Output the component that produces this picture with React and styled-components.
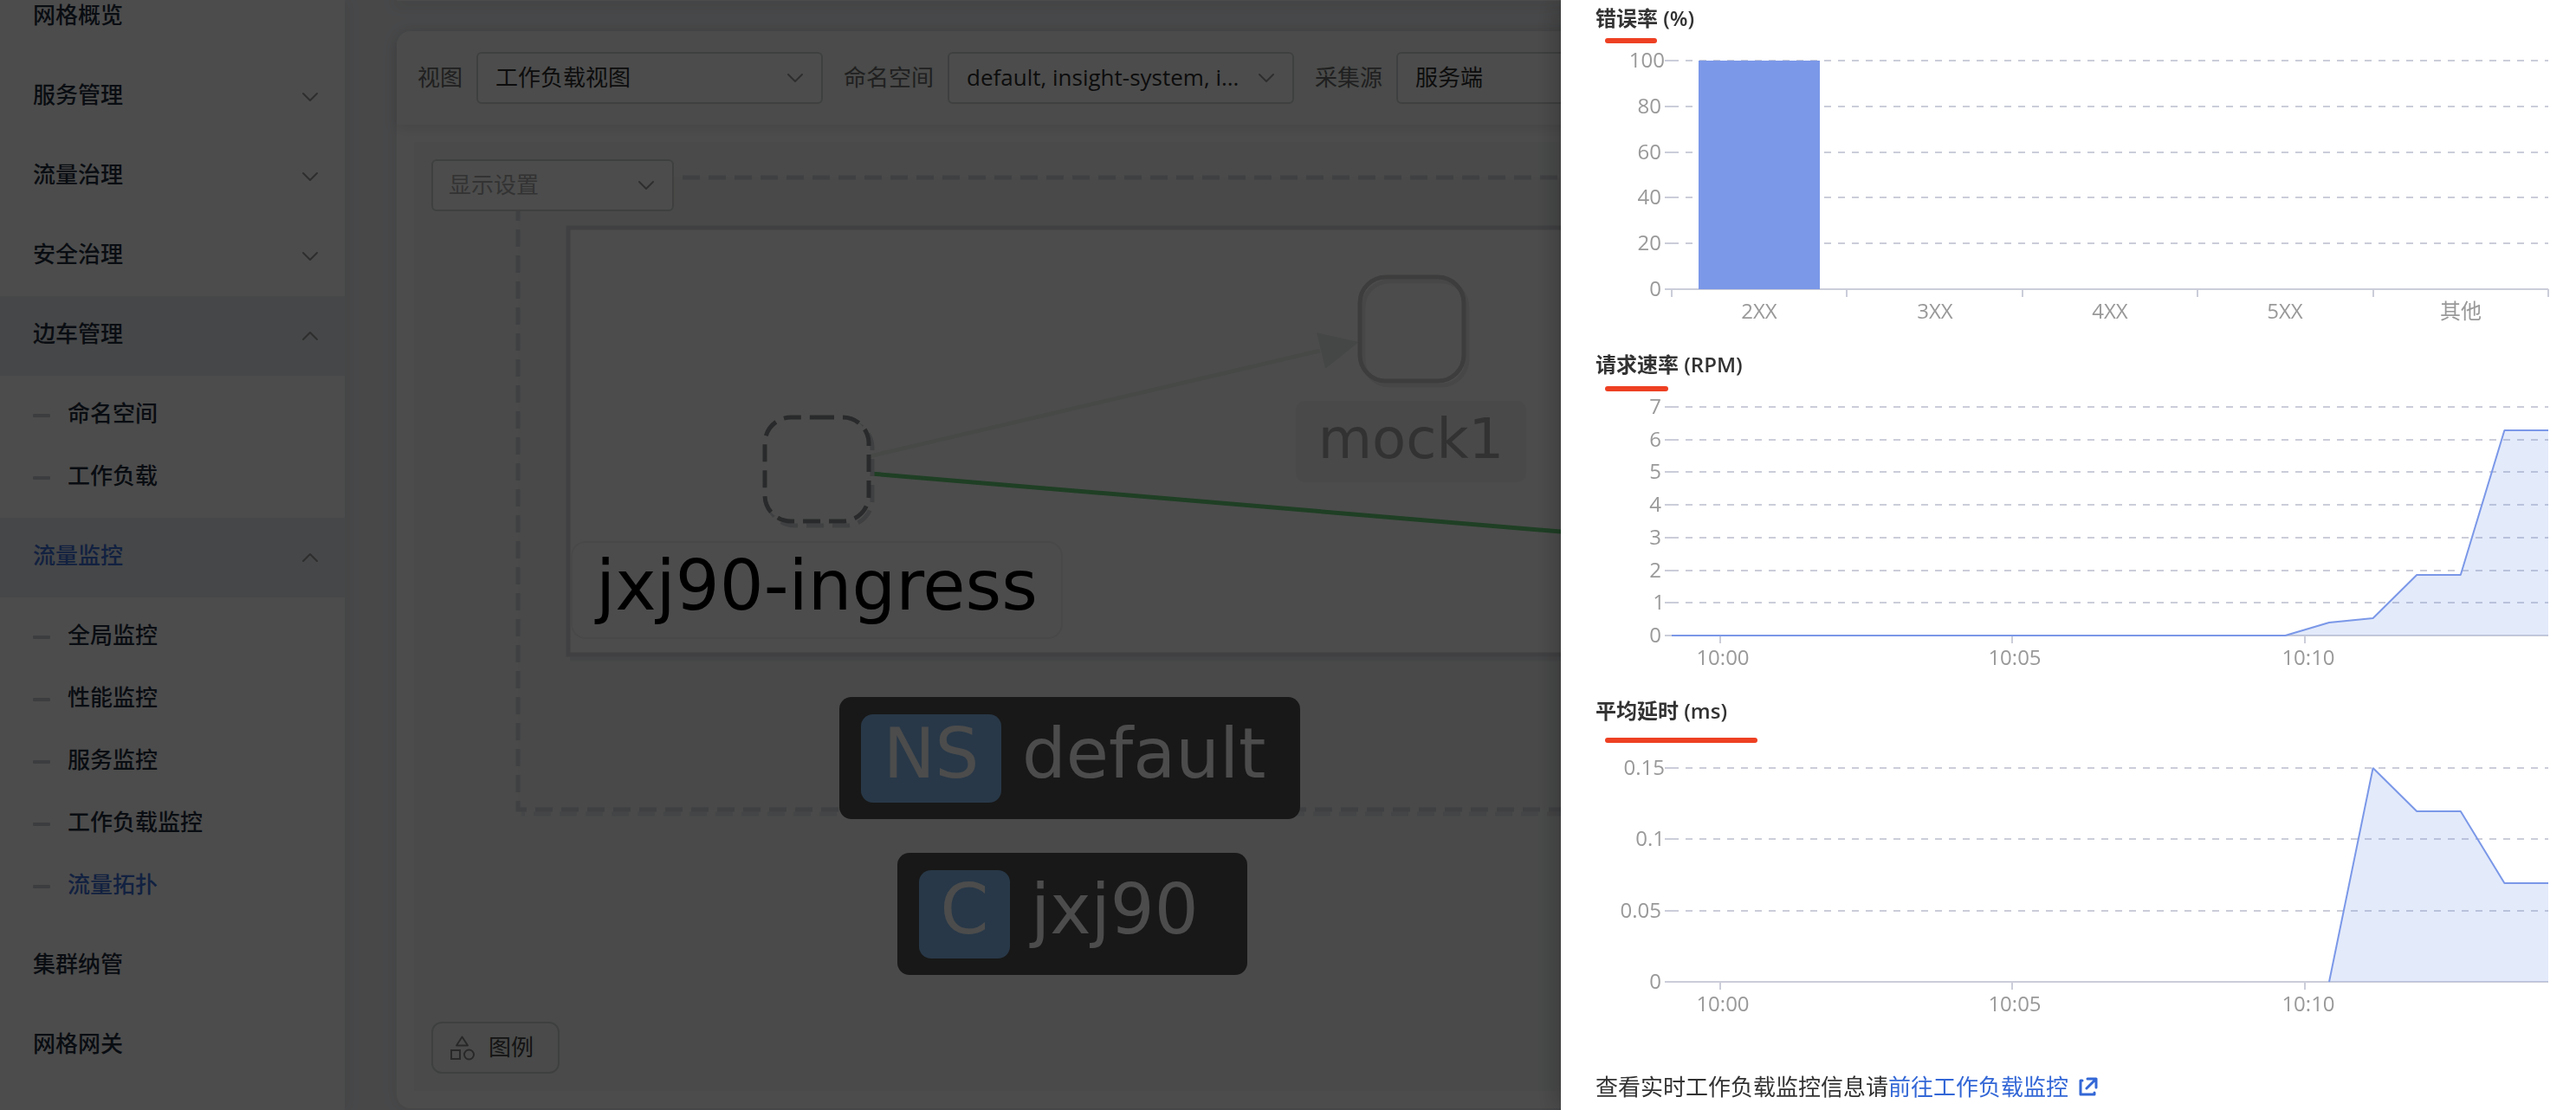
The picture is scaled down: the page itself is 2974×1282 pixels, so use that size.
import React from "react";
import styled, { createGlobalStyle, css } from "styled-components";

const UI_FONT = `"Open Sans", "Noto Sans CJK SC", sans-serif`;
const GRAPH_FONT = `"DejaVu Sans", Verdana, sans-serif`;

const GlobalStyle = createGlobalStyle`
  *, *::before, *::after { box-sizing: border-box; }
  html, body { margin: 0; height: 100%; overflow: hidden; }
  body { font-family: ${UI_FONT}; font-size: 26px; color: #333; background: #f0f2f5; }
  ul { list-style: none; margin: 0; padding: 0; }
  a { color: inherit; text-decoration: none; }
  button, select { font: inherit; color: inherit; }
`;

const Page = styled.div`
  display: flex;
  height: 100vh;
  overflow: hidden;
`;

/* ---------- sidebar ---------- */

const Sidebar = styled.nav`
  flex: 0 0 398px;
  background: #fff;
  box-shadow: 4px 0 16px rgba(0, 0, 0, 0.06);
  overflow: hidden;
`;

const Menu = styled.ul`
  margin-top: -26px;
`;

const menuRow = css`
  display: flex;
  align-items: center;
  width: 100%;
  font-weight: 500;
  color: ${(p) => (p.$active ? "#3d6fd8" : "#1f2d3d")};
`;

const MenuLink = styled.a`
  ${menuRow}
  height: 92px;
  padding: 0 28px 0 38px;
`;

const MenuToggle = styled.button`
  ${menuRow}
  height: 92px;
  justify-content: space-between;
  padding: 0 30px 0 38px;
  border: 0;
  background: ${(p) => (p.$open ? "#e9edf1" : "transparent")};
`;

const Caption = styled.span`
  padding-bottom: 4px;
`;

const MenuText = styled(Caption)`
  padding-bottom: 8px;
`;

const SubMenu = styled.ul`
  padding: 10px 0;
`;

const SubLink = styled.a`
  ${menuRow}
  height: 72px;
  gap: 20px;
  padding-left: 38px;

  &::before {
    content: "";
    width: 20px;
    height: 4px;
    border-radius: 1px;
    background: #c9cdd4;
  }
`;

const ChevronSvg = styled.svg`
  width: 20px;
  height: 12px;
  fill: none;
  stroke: #999;
  stroke-width: 2;
  stroke-linecap: round;
  stroke-linejoin: round;
  transform: ${(p) => (p.$up ? "rotate(180deg)" : "none")};
`;

const Chevron = ({ up, className }) => (
  <ChevronSvg $up={up} className={className} viewBox="0 0 20 12" aria-hidden="true">
    <path d="M2 2 L10 10 L18 2" />
  </ChevronSvg>
);

const MENU = [
  { label: "网格概览" },
  { label: "服务管理", group: true },
  { label: "流量治理", group: true },
  { label: "安全治理", group: true },
  { label: "边车管理", group: true, children: ["命名空间", "工作负载"] },
  {
    label: "流量监控",
    group: true,
    active: true,
    children: ["全局监控", "性能监控", "服务监控", "工作负载监控", "流量拓扑"],
  },
  { label: "集群纳管" },
  { label: "网格网关" },
];
const CURRENT = "流量拓扑";

const MenuEntry = ({ item }) => {
  if (!item.group) {
    return (
      <li>
        <MenuLink href="#">
          <MenuText>{item.label}</MenuText>
        </MenuLink>
      </li>
    );
  }
  const open = Boolean(item.children);
  return (
    <li>
      <MenuToggle type="button" $open={open} $active={item.active} aria-expanded={open}>
        <MenuText>{item.label}</MenuText>
        <Chevron up={open} />
      </MenuToggle>
      {open && (
        <SubMenu>
          {item.children.map((c) => (
            <li key={c}>
              <SubLink href="#" $active={c === CURRENT}>
                <MenuText>{c}</MenuText>
              </SubLink>
            </li>
          ))}
        </SubMenu>
      )}
    </li>
  );
};

/* ---------- main area ---------- */

const Main = styled.main`
  flex: 1;
  min-width: 0;
  display: flex;
  flex-direction: column;
  gap: 36px;
  padding: 0 60px 2px;
`;

const HeaderEdge = styled.div`
  flex: none;
  margin-bottom: -1px;
  height: 1px;
  background: #fff;
  box-shadow: 0 2px 16px 4px rgba(0, 0, 0, 0.1);
`;

const Card = styled.section`
  flex: 1;
  min-height: 0;
  display: flex;
  flex-direction: column;
  border-radius: 16px;
  background: #fff;
  box-shadow: 0 0 20px rgba(0, 0, 0, 0.08);
`;

const Toolbar = styled.div`
  position: relative;
  display: flex;
  align-items: center;
  gap: 24px;
  height: 108px;
  padding: 0 24px;
  border-radius: 16px 16px 0 0;
  background: #f7faf8;
  box-shadow: 0 4px 16px rgba(0, 0, 0, 0.1);
`;

const Field = styled.label`
  display: flex;
  align-items: center;
  gap: 16px;
  white-space: nowrap;
  color: #6b6b6b;
`;

const SelectWrap = styled.span`
  position: relative;
  display: block;
  width: ${(p) => p.$width}px;
`;

const Select = styled.select`
  display: block;
  width: 100%;
  height: 60px;
  padding: 0 56px 2px ${(p) => (p.$muted ? 18 : 20)}px;
  appearance: none;
  border: 2px solid #cfd3d2;
  border-radius: 6px;
  background: #fff;
  color: ${(p) => (p.$muted ? "#ababab" : "#2e2e2e")};
  opacity: 1;
`;

const SelectArrow = styled(Chevron)`
  position: absolute;
  right: 22px;
  top: 24px;
  pointer-events: none;
`;

const SelectBox = ({ value, width, muted, label }) => (
  <SelectWrap $width={width}>
    <Select $muted={muted} defaultValue={value} aria-label={label}>
      <option>{value}</option>
    </Select>
    <SelectArrow />
  </SelectWrap>
);

const Canvas = styled.div`
  position: relative;
  flex: 1;
  min-height: 0;
  display: flex;
  flex-direction: column;
  justify-content: space-between;
  align-items: flex-start;
  margin: 20px;
  padding: 20px;
  background: #f5f9f6;
`;

const GraphSvg = styled.svg`
  position: absolute;
  inset: 0;
  width: 100%;
  height: 100%;
  font-family: ${GRAPH_FONT};
`;

const LegendButton = styled.button`
  position: relative;
  display: flex;
  align-items: center;
  gap: 16px;
  height: 60px;
  padding: 0 28px 0 20px;
  border: 2px solid #cfd3d2;
  border-radius: 12px;
  background: transparent;
  color: #444;
`;

const LegendIcon = () => (
  <svg width="28" height="30" viewBox="0 0 28 30" fill="none" stroke="#888" strokeWidth="2" aria-hidden="true">
    <path d="M13.500 2.500 L20 12.500 H7 Z" strokeLinejoin="round" />
    <rect x="1" y="18" width="10" height="10" />
    <circle cx="21.500" cy="23" r="5.500" />
  </svg>
);

const Tag = ({ x, y, width, badgeWidth, code, name }) => (
  <g transform={`translate(${x} ${y})`} fill="#fff" fontSize="80">
    <rect width={width} height="141" rx="14" fill="#505050" />
    <rect x="25" y="20" width={badgeWidth} height="102" rx="14" fill="#86bbf0" />
    <text x={25 + badgeWidth / 2} y="93" textAnchor="middle">
      {code}
    </text>
    <text x={badgeWidth + 49} y="93">
      {name}
    </text>
  </g>
);

const NODE = "M60 0 H90 A30 30 0 0 1 120 30 V90 A30 30 0 0 1 90 120 H30 A30 30 0 0 1 0 90 V30 A30 30 0 0 1 30 0 Z";

const Topology = () => (
  <GraphSvg aria-label="流量拓扑" role="img">
    <g transform="translate(120 41)" fill="none" strokeWidth="5">
      <rect width="2200" height="730" fill="#f1f4f2" />
      <g strokeDasharray="20 10">
        <path d="M4 735 H2200" stroke="#e4e6ea" strokeDashoffset="16" />
        <path d="M0 0 V730 H2200" stroke="#d4d6de" />
        <path d="M0 0 H2200" stroke="#d4d6de" strokeDashoffset="20" />
      </g>

      <path d="M60 556 H2200" stroke="#e4e6ea" />
      <rect x="58" y="58" width="2000" height="493" fill="#fff" stroke="#d6d7dd" />

      <path d="M406 322 L926 200" stroke="#edf4ef" />
      <path d="M971 190 L922 179 L932 221 Z" fill="#e6efe9" />
      <path d="M407 342 L1500 434" stroke="#68d27b" />

      <g transform="translate(972 115)">
        <path d={NODE} transform="translate(4 5)" stroke="#efeff0" />
        <path d={NODE} stroke="#cbcbce" />
      </g>
      <g transform="translate(285 277)" strokeDasharray="20 10">
        <path d={NODE} transform="translate(4 5)" stroke="#d2d5d9" />
        <path d={NODE} fill="#fff" stroke="#8a8c90" />
      </g>

      <rect x="898" y="258" width="266" height="94" rx="10" fill="#f4f4f4" />
      <text x="1031" y="324" textAnchor="middle" fontSize="64" fill="#a8a8a8">
        mock1
      </text>

      <rect x="62" y="421" width="566" height="111" rx="16" fill="#fff" stroke="#f2f2f2" strokeWidth="2" />
      <text x="345" y="499" textAnchor="middle" fontSize="80" fill="#000">
        jxj90-ingress
      </text>

      <Tag x={371} y={600} width={532} badgeWidth={162} code="NS" name="default" />
      <Tag x={438} y={780} width={404} badgeWidth={105} code="C" name="jxj90" />
    </g>
  </GraphSvg>
);

/* ---------- drawer ---------- */

const Mask = styled.div`
  position: fixed;
  inset: 0;
  background: rgba(0, 0, 0, 0.7);
`;

const Drawer = styled.aside`
  position: fixed;
  top: 0;
  right: 0;
  bottom: 0;
  width: 1172px;
  padding: 4px 32px 0 40px;
  background: #fff;
  box-shadow: -8px 0 24px rgba(0, 0, 0, 0.2);
  overflow: hidden;
`;

const Panel = styled.section`
  padding-bottom: 24px;
`;

const PanelTitle = styled.h2`
  position: relative;
  margin: 0;
  padding-bottom: 2px;
  font-size: 24px;
  line-height: 34px;
  font-weight: 600;
  color: #333;
`;

const Underline = styled.span`
  position: absolute;
  left: 11px;
  top: ${(p) => p.$top}px;
  width: ${(p) => p.$width}px;
  height: 6px;
  border-radius: 3px;
  background: #ee4023;
`;

const ChartSvg = styled.svg`
  display: block;
  width: 100%;
  height: auto;
  overflow: visible;
  font-size: 24px;
  fill: #999;
`;

const Footer = styled.p`
  display: flex;
  align-items: center;
  margin: 32px 0 0;
  line-height: 38px;
  color: #333;
`;

const FooterLink = styled.a`
  display: flex;
  align-items: center;
  gap: 12px;
  color: #3367d6;
`;

const LEFT = 88;
const RIGHT = 1100;
const BASE = 294;
const TOP = 30;
const STEP = (RIGHT - LEFT) / 20;
const LINE = "#cbcdd9";

/* Axis frame shared by the bar chart and both area charts. */
const Frame = ({ top = TOP, yTicks, xTicks, children }) => {
  const yAt = (i) => Math.round(BASE - (i * (BASE - top)) / (yTicks.length - 1));
  return (
    <ChartSvg viewBox="0 0 1100 340">
      <g stroke={LINE} strokeWidth="2">
        {yTicks.map((t, i) => (
          <React.Fragment key={t}>
            <path d={`M80 ${yAt(i)} H${LEFT}`} />
            {i > 0 && <path d={`M${LEFT} ${yAt(i)} H${RIGHT}`} strokeDasharray="8 8" />}
          </React.Fragment>
        ))}
        <path d={`M${LEFT} ${BASE} H${RIGHT}`} />
        {xTicks.marks.map((x) => (
          <path key={x} d={`M${x} ${BASE} v9`} />
        ))}
      </g>
      {yTicks.map((t, i) => (
        <text key={t} x={t.includes("1") ? 80 : 76} y={yAt(i) + 8} textAnchor="end">
          {t}
        </text>
      ))}
      {xTicks.labels.map(([x, t]) => (
        <text key={t} x={x} y="328" textAnchor="middle">
          {t}
        </text>
      ))}
      {children}
    </ChartSvg>
  );
};

const Area = ({ start, ys }) => {
  const pts = ys.map((y, i) => `${LEFT + (start + i) * STEP} ${y}`);
  const line = `M${pts.join(" L")}`;
  return (
    <>
      <path d={`${line} L${RIGHT} ${BASE} L${LEFT + start * STEP} ${BASE} Z`} fill="#7398e8" fillOpacity="0.2" />
      <path d={line} fill="none" stroke="#7b98e8" strokeWidth="2" strokeLinejoin="bevel" />
    </>
  );
};

const STATUS = ["2XX", "3XX", "4XX", "5XX", "其他"];
const BAND = (RIGHT - LEFT) / STATUS.length;
const STATUS_AXIS = {
  marks: [0, 1, 2, 3, 4, 5].map((i) => Math.round(LEFT + i * BAND)),
  labels: STATUS.map((s, i) => [Math.round(LEFT + (i + 0.5) * BAND), s]),
};
const TIME_AXIS = {
  marks: [144, 481, 819],
  labels: [
    [147, "10:00"],
    [484, "10:05"],
    [823, "10:10"],
  ],
};

const OpenIcon = () => (
  <svg
    width="22"
    height="22"
    viewBox="0 0 22 22"
    fill="none"
    stroke="#3367d6"
    strokeWidth="3"
    strokeLinecap="round"
    strokeLinejoin="round"
    aria-hidden="true"
  >
    <path d="M4 4 H2 V20 H18 V18" />
    <path d="M10 2 H20 V12 M20 2 L9 13" />
  </svg>
);

export default function App() {
  return (
    <>
      <GlobalStyle />
      <Page>
        <Sidebar>
          <Menu>
            {MENU.map((m) => (
              <MenuEntry key={m.label} item={m} />
            ))}
          </Menu>
        </Sidebar>
        <Main>
          <HeaderEdge />
          <Card>
            <Toolbar>
              <Field>
                <Caption>视图</Caption>
                <SelectBox value="工作负载视图" width={400} />
              </Field>
              <Field>
                <Caption>命名空间</Caption>
                <SelectBox value="default, insight-system, i..." width={400} />
              </Field>
              <Field>
                <Caption>采集源</Caption>
                <SelectBox value="服务端" width={400} />
              </Field>
            </Toolbar>
            <Canvas>
              <Topology />
              <SelectBox value="显示设置" label="显示设置" width={280} muted />
              <LegendButton type="button">
                <LegendIcon />
                <Caption>图例</Caption>
              </LegendButton>
            </Canvas>
          </Card>
        </Main>
      </Page>

      <Mask />
      <Drawer>
        <Panel>
          <PanelTitle>
            错误率 (%)
            <Underline $top={40} $width={60} />
          </PanelTitle>
          <Frame yTicks={["0", "20", "40", "60", "80", "100"]} xTicks={STATUS_AXIS}>
            <rect x="119" y={TOP} width="140" height={BASE - TOP} fill="#7b98e8" />
          </Frame>
        </Panel>
        <Panel>
          <PanelTitle>
            请求速率 (RPM)
            <Underline $top={42} $width={73} />
          </PanelTitle>
          <Frame yTicks={["0", "1", "2", "3", "4", "5", "6", "7"]} xTicks={TIME_AXIS}>
            <Area
              start={0}
              ys={[...Array(15).fill(BASE), 279, 274, 224, 224, 57, 57]}
            />
          </Frame>
        </Panel>
        <Panel>
          <PanelTitle>
            平均延时 (ms)
            <Underline $top={48} $width={176} />
          </PanelTitle>
          <Frame top={47} yTicks={["0", "0.05", "0.1", "0.15"]} xTicks={TIME_AXIS}>
            <Area start={15} ys={[BASE, 47, 97, 97, 180, 180]} />
          </Frame>
        </Panel>
        <Footer>
          查看实时工作负载监控信息请
          <FooterLink href="#">
            前往工作负载监控
            <OpenIcon />
          </FooterLink>
        </Footer>
      </Drawer>
    </>
  );
}
